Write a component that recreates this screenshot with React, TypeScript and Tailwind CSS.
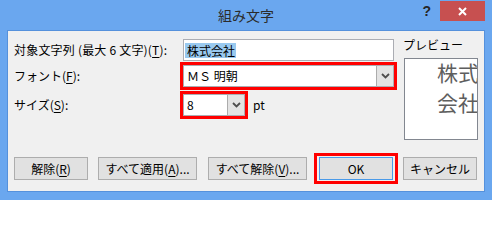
import type { ReactNode } from "react";
import clsx from "clsx";

function U({ children }: { children: ReactNode }) {
  return <span className="underline decoration-1 underline-offset-[2px]">{children}</span>;
}

function Chevron() {
  return (
    <svg width="9" height="6" viewBox="0 0 9 6">
      <path d="M1 1 L4.5 4.5 L8 1" fill="none" stroke="#4d4d4d" strokeWidth="1.8" />
    </svg>
  );
}

function Combo({ value }: { value: string }) {
  return (
    <div className="flex h-full w-full border border-[#abadb3] bg-white">
      <div className="flex flex-1 items-center pl-[3px] leading-[16px]">{value}</div>
      <div className="flex w-[17px] items-center justify-center border-l border-[#acacac] bg-[#e3e3e3]">
        <Chevron />
      </div>
    </div>
  );
}

function Btn({ children, className }: { children: ReactNode; className?: string }) {
  return (
    <button
      type="button"
      className={clsx(
        "flex h-[23px] shrink-0 items-center justify-center border bg-[#e1e1e1] text-[12px] leading-[16px] text-black",
        className ?? "border-[#adadad]"
      )}
    >
      {children}
    </button>
  );
}

export default function App() {
  return (
    <div className="flex min-h-[200px] w-[492px] flex-col bg-[#6aa7ef] pb-[8px] font-['Noto_Sans_CJK_JP',sans-serif] text-[12px] text-black">
      {/* title bar */}
      <div className="grid h-[30px] shrink-0 grid-cols-[1fr_auto_1fr]">
        <div />
        <div className="pt-[4px] text-[14px] leading-[22px] text-[#2b2b2b]">組み文字</div>
        <div className="flex items-start justify-end">
          <span className="mr-[9px] mt-[3px] font-['Liberation_Sans',sans-serif] text-[14px] font-bold leading-[16px] text-[#262626]">
            ?
          </span>
          <div className="mr-[7px] mt-[1px] flex h-[20px] w-[45px] items-center justify-center bg-[#c75050]">
            <svg width="9" height="9" viewBox="0 0 9 9">
              <path d="M1 1 L8 8 M8 1 L1 8" stroke="#ffffff" strokeWidth="2" />
            </svg>
          </div>
        </div>
      </div>

      {/* client area */}
      <div className="mx-[7px] flex shrink-0 flex-col border border-[#5591dc] bg-[#f0f0f0] pb-[7px]">
        <div className="flex h-[122px] shrink-0">
          <div className="flex w-[389px] flex-col gap-px pt-[8px]">
            <div className="flex h-[22px] items-center">
              <div className="w-[172px] pl-[6px] leading-[16px] tracking-[0.2px]">
                対象文字列 (最大 6 文字)(<U>T</U>):
              </div>
              <div className="ml-[3px] flex h-[22px] w-[211px] items-center border border-[#abadb3] bg-white pl-[1px]">
                <span className="bg-[#99c9ef] pl-[2px] pr-[1px] leading-[15px]">株式会社</span>
              </div>
            </div>
            <div className="flex h-[28px] items-center">
              <div className="w-[172px] pl-[6px] leading-[16px]">
                フォント(<U>F</U>):
              </div>
              <div className="h-[28px] w-[217px] border-[3px] border-[#ff0000]">
                <Combo value="ＭＳ 明朝" />
              </div>
            </div>
            <div className="flex h-[28px] items-center">
              <div className="w-[172px] pl-[6px] leading-[16px]">
                サイズ(<U>S</U>):
              </div>
              <div className="h-[28px] w-[68px] border-[3px] border-[#ff0000]">
                <Combo value="8" />
              </div>
              <span className="ml-[5px] leading-[16px]">pt</span>
            </div>
          </div>

          <div className="ml-[6px] flex flex-col pt-[7px]">
            <div className="leading-[14px]">プレビュー</div>
            <div className="ml-[1px] mt-[6px] h-[82px] w-[74px] overflow-hidden border border-[#828790] bg-white">
              <div className="-mt-[2px] whitespace-nowrap pl-[32px] text-[21px] leading-[30px] text-[#5e5e5e]">
                <div>株式</div>
                <div>会社</div>
              </div>
            </div>
          </div>
        </div>

        {/* buttons */}
        <div className="flex h-[31px] shrink-0 items-center pl-[6px]">
          <Btn className="w-[74px] border-[#adadad]">
            解除(<U>R</U>)
          </Btn>
          <Btn className="ml-[10px] w-[99px] border-[#adadad]">
            すべて適用(<U>A</U>)...
          </Btn>
          <Btn className="ml-[11px] w-[99px] border-[#adadad]">
            すべて解除(<U>V</U>)...
          </Btn>
          <div className="ml-[7px] flex h-[31px] w-[84px] shrink-0 items-center justify-center border-[3px] border-[#ff0000]">
            <Btn className="w-[74px] border-[#4a9ae8]">OK</Btn>
          </div>
          <Btn className="ml-[5px] w-[74px] border-[#adadad]">キャンセル</Btn>
        </div>
      </div>
    </div>
  );
}
